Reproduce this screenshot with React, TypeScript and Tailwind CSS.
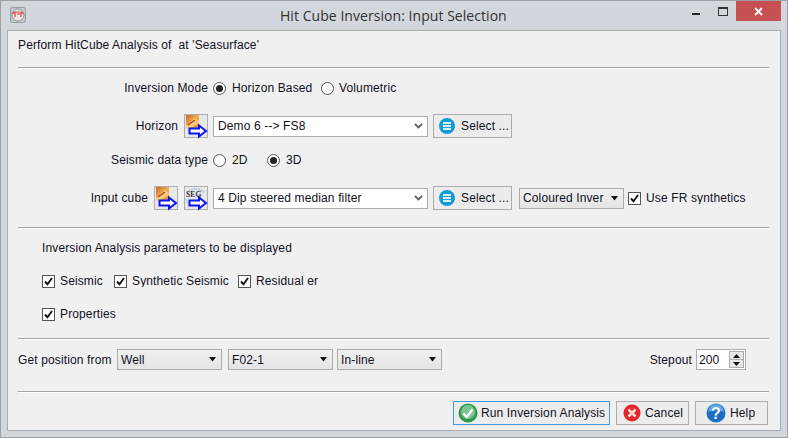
import type { ReactNode } from "react";

function Divider({ className }: { className: string }) {
  return <div className={`h-[2px] w-[751px] shrink-0 border-t border-b border-t-[#a5a5a5] border-b-white ${className}`} />;
}

function AppIcon() {
  return (
    <svg width="16" height="16" viewBox="0 0 16 16">
      <rect x="0.5" y="0.5" width="15" height="15" rx="2" fill="#c9c9c9" stroke="#9a9a9a" />
      <circle cx="8" cy="8" r="6" fill="#e8e8e8" stroke="#8f8f8f" />
      <path d="M2.5 6.5 L5 5 L11 5 L13.5 6.5 M5 5 V10 M11 5 V10 M7 7 H10" fill="none" stroke="#e63946" strokeWidth="1.2" />
    </svg>
  );
}

function BlueArrow() {
  return (
    <path
      d="M5.5 13.5 H15 V10.5 L22 16 L15 21.5 V18.5 H5.5 Z"
      fill="#ffffff"
      stroke="#0a12ff"
      strokeWidth="2"
      strokeLinejoin="miter"
    />
  );
}

function HorizonIcon({ id }: { id: string }) {
  return (
    <svg width="22" height="22" viewBox="0 0 22 22" className="overflow-visible">
      <defs>
        <linearGradient id={id} x1="0" y1="0" x2="1" y2="1">
          <stop offset="0" stopColor="#c9622c" />
          <stop offset="0.5" stopColor="#eeb04e" />
          <stop offset="1" stopColor="#e58a2e" />
        </linearGradient>
      </defs>
      <rect x="1" y="0" width="13" height="13" fill={`url(#${id})`} />
      <path d="M1 11 L10 3 L14 6 L14 8 L4 14 L1 14 Z" fill="#f6d58a" opacity="0.8" />
      <path d="M3 10 L10 5" stroke="#b8431f" strokeWidth="1.4" />
      <g transform="translate(-1 0)">
        <BlueArrow />
      </g>
    </svg>
  );
}

function SegIcon() {
  return (
    <svg width="22" height="22" viewBox="0 0 22 22" className="overflow-visible">
      <path d="M2 6 Q10 -2 20 6" fill="none" stroke="#8fb8e0" strokeWidth="1.4" strokeDasharray="1.5 1" />
      <path d="M1 12 Q1 15 4 17" fill="none" stroke="#8fb8e0" strokeWidth="1.2" strokeDasharray="1.5 1" />
      <text x="1" y="10" fontSize="7.5" fontWeight="700" fontFamily="'Liberation Serif', serif" fill="#333333">
        SEG
      </text>
      <g transform="translate(-1 0)">
        <BlueArrow />
      </g>
    </svg>
  );
}

function IconButton({ children }: { children: ReactNode }) {
  return (
    <div className="flex h-[24px] w-[24px] shrink-0 items-center justify-center border border-[#adadad] bg-[#e8e8e8]">
      {children}
    </div>
  );
}

function SelectIcon() {
  return (
    <svg width="16" height="16" viewBox="0 0 16 16">
      <circle cx="8" cy="8" r="8" fill="#129bdb" />
      <path d="M4 5 H12 M4 8 H12 M4 11 H12" stroke="#d9f1fb" strokeWidth="2" />
    </svg>
  );
}

function SelectButton() {
  return (
    <button className="ml-[5px] flex h-[24px] w-[79px] shrink-0 items-center border border-[#adadad] bg-[#ececec] pl-[5px] text-left">
      <SelectIcon />
      <span className="ml-[6px]">Select ...</span>
    </button>
  );
}

function InputCombo({ value }: { value: string }) {
  return (
    <div className="ml-[5px] flex h-[21px] w-[215px] shrink-0 items-center justify-between border border-[#acacac] bg-white pl-[4px] pr-[4px]">
      <span>{value}</span>
      <svg width="9" height="6" viewBox="0 0 9 6">
        <path d="M1 1 L4.5 4.5 L8 1" fill="none" stroke="#606060" strokeWidth="1.8" />
      </svg>
    </div>
  );
}

function GrayCombo({ value, className }: { value: string; className: string }) {
  return (
    <div className={`flex h-[21px] w-[105px] shrink-0 items-center justify-between border border-[#acacac] bg-gradient-to-b from-[#f0f0f0] to-[#e4e4e4] pl-[3px] pr-[5px] ${className}`}>
      <span className="w-[81px] overflow-hidden whitespace-nowrap">{value}</span>
      <svg width="7" height="5" viewBox="0 0 7 5" className="shrink-0">
        <path d="M0 0 H7 L3.5 4.5 Z" fill="#111111" />
      </svg>
    </div>
  );
}

function Radio({ checked, className }: { checked: boolean; className: string }) {
  return (
    <span className={`flex h-[13px] w-[13px] shrink-0 items-center justify-center rounded-full border border-[#555555] bg-white ${className}`}>
      {checked && <span className="h-[7px] w-[7px] rounded-full bg-[#222222]" />}
    </span>
  );
}

function Check({ label, className }: { label: string; className?: string }) {
  return (
    <span className={`flex shrink-0 items-center ${className ?? ""}`}>
      <span className="flex h-[13px] w-[13px] shrink-0 items-center justify-center border border-[#555555] bg-white">
        <svg width="9" height="9" viewBox="0 0 9 9">
          <path d="M1 4.5 L3.5 7.2 L8 1" fill="none" stroke="#111111" strokeWidth="1.9" />
        </svg>
      </span>
      <span className="ml-[5px] overflow-hidden whitespace-nowrap">{label}</span>
    </span>
  );
}

function FootButton({ icon, label, className }: { icon: ReactNode; label: string; className: string }) {
  return (
    <button className={`flex h-[24px] shrink-0 items-center ${className}`}>
      {icon}
      <span className="whitespace-nowrap">{label}</span>
    </button>
  );
}

function RunIcon() {
  return (
    <svg width="20" height="20" viewBox="0 0 20 20">
      <circle cx="10" cy="10" r="9.5" fill="#2f9a4c" />
      <circle cx="10" cy="9" r="7" fill="#7cc490" />
      <path d="M5.5 10.5 L8.7 14 L14.5 6.5" fill="none" stroke="#ffffff" strokeWidth="2.4" />
    </svg>
  );
}

function CancelIcon() {
  return (
    <svg width="18" height="18" viewBox="0 0 18 18">
      <circle cx="9" cy="9" r="8.5" fill="#e2262b" />
      <path d="M5.5 5.5 L12.5 12.5 M12.5 5.5 L5.5 12.5" stroke="#f7dcd0" strokeWidth="2.6" />
    </svg>
  );
}

function HelpIcon() {
  return (
    <svg width="20" height="20" viewBox="0 0 20 20">
      <circle cx="10" cy="10" r="9.5" fill="#1a6fc4" />
      <path d="M2 9 A8 8 0 0 1 18 9 Q10 5 2 9 Z" fill="#5aa6e6" />
      <text x="10" y="16" textAnchor="middle" fontSize="16" fontWeight="700" fontFamily="'Liberation Sans', sans-serif" fill="#ffffff">
        ?
      </text>
    </svg>
  );
}

export default function App() {
  return (
    <div className="flex h-[438px] w-[788px] flex-col border border-[#9c9fa3] bg-[#d2d6dd] font-['Liberation_Sans',sans-serif] text-[12px] leading-none tracking-[0.13px] text-[#111122]">
      {/* title bar */}
      <div className="flex h-[29px] shrink-0 items-start">
        <div className="ml-[9px] mt-[6px]">
          <AppIcon />
        </div>
        <div className="ml-[254px] mt-[7px] whitespace-nowrap font-['Open_Sans',sans-serif] text-[14px] leading-[16px] tracking-[0.05px] text-[#333333]">
          Hit Cube Inversion: Input Selection
        </div>
        <div className="ml-auto mr-[6px] flex items-start">
          <div className="mr-[18px] mt-[12px] h-[2px] w-[8px] bg-[#222222]" />
          <div className="mr-[8px] mt-[6px] h-[9px] w-[10px] border border-t-2 border-[#333333]" />
          <div className="flex h-[20px] w-[45px] items-center justify-center bg-[#c75050]">
            <svg width="9" height="9" viewBox="0 0 9 9">
              <path d="M1 1 L8 8 M8 1 L1 8" stroke="#ffffff" strokeWidth="2" />
            </svg>
          </div>
        </div>
      </div>

      {/* main panel */}
      <div className="ml-[6px] flex h-[401px] w-[774px] flex-col border border-[#a9adb2] bg-[#f0f0f0] pl-[10px]">
        <div className="flex h-[28px] shrink-0 items-center whitespace-pre">Perform HitCube Analysis of  at 'Seasurface'</div>
        <Divider className="mt-[8px]" />

        <div className="mt-[7px] flex h-[24px] shrink-0 items-center">
          <span className="flex w-[190px] justify-end whitespace-nowrap">Inversion Mode</span>
          <Radio checked className="ml-[5px]" />
          <span className="ml-[6px] w-[83px] whitespace-nowrap">Horizon Based</span>
          <Radio checked={false} className="ml-[6px]" />
          <span className="ml-[5px] whitespace-nowrap">Volumetric</span>
        </div>

        <div className="mt-[14px] flex h-[24px] shrink-0 items-center">
          <span className="flex w-[160px] justify-end whitespace-nowrap">Horizon</span>
          <div className="ml-[6px]">
            <IconButton>
              <HorizonIcon id="horizon-a" />
            </IconButton>
          </div>
          <InputCombo value="Demo 6 --> FS8" />
          <SelectButton />
        </div>

        <div className="mt-[10px] flex h-[24px] shrink-0 items-center">
          <span className="flex w-[190px] justify-end whitespace-nowrap">Seismic data type</span>
          <Radio checked={false} className="ml-[5px]" />
          <span className="ml-[6px] w-[29px] whitespace-nowrap">2D</span>
          <Radio checked className="ml-[6px]" />
          <span className="ml-[6px] whitespace-nowrap">3D</span>
        </div>

        <div className="mt-[14px] flex h-[24px] shrink-0 items-center">
          <span className="flex w-[130px] justify-end whitespace-nowrap">Input cube</span>
          <div className="ml-[6px]">
            <IconButton>
              <HorizonIcon id="horizon-b" />
            </IconButton>
          </div>
          <div className="ml-[6px]">
            <IconButton>
              <SegIcon />
            </IconButton>
          </div>
          <InputCombo value="4 Dip steered median filter" />
          <SelectButton />
          <GrayCombo value="Coloured Inver" className="ml-[7px]" />
          <Check label="Use FR synthetics" className="ml-[4px]" />
        </div>
        <Divider className="mt-[17px]" />

        <div className="mt-[7px] flex h-[24px] shrink-0 items-center pl-[24px]">Inversion Analysis parameters to be displayed</div>

        <div className="mt-[9px] flex h-[24px] shrink-0 items-center pl-[24px]">
          <Check label="Seismic" className="w-[72px]" />
          <Check label="Synthetic Seismic" className="w-[124px]" />
          <Check label="Residual error" className="w-[80px]" />
        </div>

        <div className="mt-[9px] flex h-[24px] shrink-0 items-center pl-[24px]">
          <Check label="Properties" />
        </div>
        <Divider className="mt-[12px]" />

        <div className="mt-[9px] flex h-[21px] w-[751px] shrink-0 items-center">
          <span className="w-[99px] whitespace-nowrap">Get position from</span>
          <GrayCombo value="Well" className="" />
          <GrayCombo value="F02-1" className="ml-[6px]" />
          <GrayCombo value="In-line" className="ml-[4px]" />
          <span className="ml-auto whitespace-nowrap">Stepout</span>
          <div className="ml-[4px] mr-[23px] flex h-[21px] w-[50px] items-center justify-between border border-[#acacac] bg-white pl-[2px] pr-[1px]">
            <span>200</span>
            <div className="flex h-[17px] w-[15px] flex-col border border-[#acacac] bg-[#e8e8e8]">
              <div className="flex h-[8px] items-center justify-center border-b border-[#acacac]">
                <svg width="7" height="4" viewBox="0 0 7 4">
                  <path d="M0 4 H7 L3.5 0 Z" fill="#111111" />
                </svg>
              </div>
              <div className="flex h-[7px] items-center justify-center">
                <svg width="7" height="4" viewBox="0 0 7 4">
                  <path d="M0 0 H7 L3.5 4 Z" fill="#111111" />
                </svg>
              </div>
            </div>
          </div>
        </div>
        <Divider className="mt-[21px]" />

        <div className="mt-[8px] flex h-[24px] w-[750px] shrink-0 items-center justify-end">
          <FootButton
            icon={<RunIcon />}
            label="Run Inversion Analysis"
            className="w-[157px] gap-[3px] border border-[#3f9ae8] bg-[#ececec] pl-[4px]"
          />
          <FootButton
            icon={<CancelIcon />}
            label="Cancel"
            className="ml-[6px] w-[73px] gap-[4px] border border-[#adadad] bg-[#ececec] pl-[6px]"
          />
          <FootButton
            icon={<HelpIcon />}
            label="Help"
            className="ml-[6px] w-[73px] gap-[4px] border border-[#adadad] bg-[#ececec] pl-[10px]"
          />
        </div>
      </div>
    </div>
  );
}
